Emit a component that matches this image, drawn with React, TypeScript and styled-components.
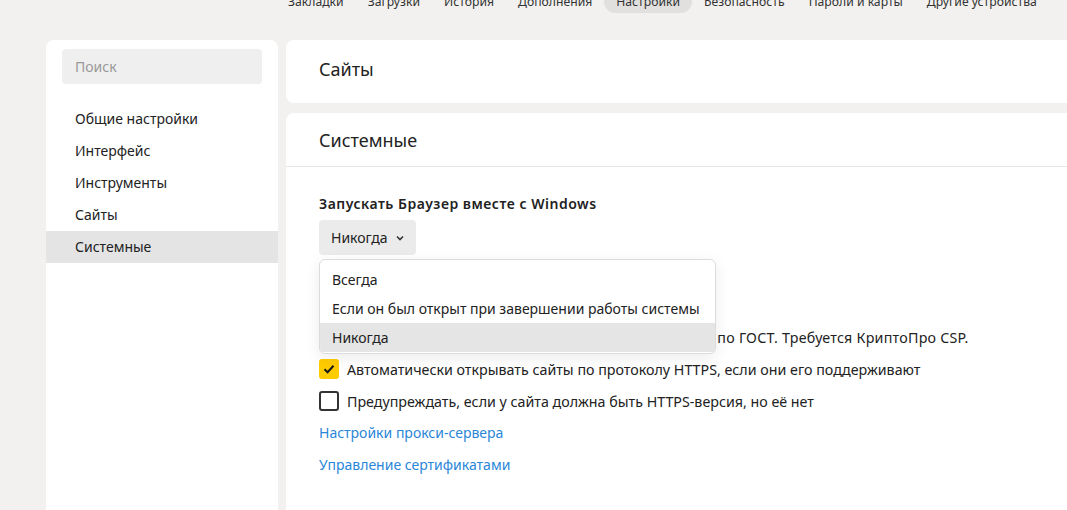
import React, { useState } from 'react';
import styled, { createGlobalStyle } from 'styled-components';

const GlobalStyle = createGlobalStyle`
    html, body {
        margin: 0;
        padding: 0;
        background: #f2f1ef;
        font-family: "Noto Sans", "Liberation Sans", sans-serif;
        color: #222;
        overflow: hidden;
    }
`;

const navItems = ['Закладки', 'Загрузки', 'История', 'Дополнения', 'Настройки', 'Безопасность', 'Пароли и карты', 'Другие устройства'];
const menuItems = ['Общие настройки', 'Интерфейс', 'Инструменты', 'Сайты', 'Системные'];
const startOptions = ['Всегда', 'Если он был открыт при завершении работы системы', 'Никогда'];

const App = () => {
    const [startMode, setStartMode] = useState('Никогда');
    const [httpsAuto, setHttpsAuto] = useState(true);
    const [httpsWarn, setHttpsWarn] = useState(false);
    const [gost, setGost] = useState(false);

    return (
        <React.Fragment>
            <GlobalStyle />
            <Page>
                <Nav>
                    {navItems.map(el => (
                        <NavTab key={el} $active={el === 'Настройки'}>{el}</NavTab>
                    ))}
                </Nav>
                <Body>
                    <Sidebar>
                        <Search placeholder="Поиск" />
                        <Menu>
                            {menuItems.map(el => (
                                <MenuItem key={el} $active={el === 'Системные'}>{el}</MenuItem>
                            ))}
                        </Menu>
                    </Sidebar>
                    <Main>
                        <Card>
                            <CardTitle>Сайты</CardTitle>
                        </Card>
                        <Card $grow>
                            <CardHeader>
                                <CardTitle>Системные</CardTitle>
                            </CardHeader>
                            <Content>
                                <Label>Запускать Браузер вместе с Windows</Label>
                                <SelectWrap>
                                    <SelectButton>
                                        {startMode}
                                        <svg width="8" height="6" viewBox="0 0 8 6">
                                            <path d="M1 1.5 L4 4.5 L7 1.5" stroke="#333" strokeWidth="1.6" fill="none" />
                                        </svg>
                                    </SelectButton>
                                    <Dropdown>
                                        {startOptions.map(el => (
                                            <Option key={el} $selected={el === startMode} onClick={() => setStartMode(el)}>{el}</Option>
                                        ))}
                                    </Dropdown>
                                </SelectWrap>
                                <SubHeading>Сеть</SubHeading>
                                <CheckRow onClick={() => setGost(!gost)}>
                                    <CheckBox $checked={gost}>{gost && <CheckMark />}</CheckBox>
                                    <span>
                                        <Spaced $amount={-0.15}>Подключаться к сайтам, использующим шифрование</Spaced>{' '}
                                        <Spaced $amount={0.25}>по ГОСТ. Требуется КриптоПро CSP.</Spaced>
                                    </span>
                                </CheckRow>
                                <CheckRow onClick={() => setHttpsAuto(!httpsAuto)}>
                                    <CheckBox $checked={httpsAuto}>{httpsAuto && <CheckMark />}</CheckBox>
                                    Автоматически открывать сайты по протоколу HTTPS, если они его поддерживают
                                </CheckRow>
                                <CheckRow onClick={() => setHttpsWarn(!httpsWarn)}>
                                    <CheckBox $checked={httpsWarn}>{httpsWarn && <CheckMark />}</CheckBox>
                                    Предупреждать, если у сайта должна быть HTTPS-версия, но её нет
                                </CheckRow>
                                <Link>Настройки прокси-сервера</Link>
                                <Link>Управление сертификатами</Link>
                            </Content>
                        </Card>
                    </Main>
                </Body>
            </Page>
        </React.Fragment>
    );
};

const CheckMark = () => (
    <svg width="14" height="14" viewBox="0 0 14 14">
        <path d="M2.5 7.2 L5.6 10.2 L11.5 3.8" stroke="#1a1a1a" strokeWidth="2" fill="none" />
    </svg>
);

const Page = styled.div`
    display: flex;
    flex-direction: column;
    height: 540px;
`;

const Nav = styled.div`
    display: flex;
    margin-top: -11px;
    padding-left: 276px;
    height: 24px;
    align-items: center;
`;

const NavTab = styled.div<{ $active?: boolean }>`
    font-size: 12.2px;
    color: #333;
    padding: 3px 12px;
    border-radius: 12px;
    white-space: nowrap;
    background: ${p => (p.$active ? '#e1e0de' : 'transparent')};
`;

const Body = styled.div`
    display: flex;
    gap: 8px;
    padding: 27px 0 0 46px;
    flex: 1;
    min-height: 0;
`;

const Sidebar = styled.div`
    width: 232px;
    flex-shrink: 0;
    background: #fff;
    border-radius: 8px 8px 0 0;
    padding-top: 9px;
`;

const Search = styled.input`
    display: block;
    box-sizing: border-box;
    width: 200px;
    height: 35px;
    margin: 0 16px;
    border: none;
    outline: none;
    border-radius: 4px;
    background: #efefef;
    padding: 0 13px;
    font-family: inherit;
    font-size: 14px;
    color: #222;
    &::placeholder {
        color: #999;
    }
`;

const Menu = styled.div`
    display: flex;
    flex-direction: column;
    margin-top: 19px;
`;

const MenuItem = styled.div<{ $active?: boolean }>`
    height: 32px;
    line-height: 32px;
    padding-left: 29px;
    font-size: 14px;
    color: #222;
    background: ${p => (p.$active ? '#e4e4e4' : 'transparent')};
`;

const Main = styled.div`
    flex: 1;
    display: flex;
    flex-direction: column;
    gap: 10px;
    margin-right: -20px;
`;

const Card = styled.div<{ $grow?: boolean }>`
    background: #fff;
    border-radius: 8px 0 0 8px;
    display: flex;
    flex-direction: column;
    ${p => (p.$grow ? 'flex: 1; border-bottom-left-radius: 0;' : 'height: 63px; justify-content: center; padding-bottom: 5px; box-sizing: border-box;')}
    padding-left: ${p => (p.$grow ? '0' : '33px')};
`;

const CardHeader = styled.div`
    height: 53px;
    display: flex;
    align-items: center;
    padding-left: 33px;
    border-bottom: 1px solid #e6e6e6;
`;

const CardTitle = styled.div`
    font-size: 18px;
    color: #222;
`;

const Content = styled.div`
    display: flex;
    flex-direction: column;
    align-items: flex-start;
    padding: 27px 0 0 33px;
`;

const Label = styled.div`
    font-size: 14px;
    font-weight: 600;
    letter-spacing: 0.5px;
    line-height: 20px;
    margin-bottom: 6px;
`;

const SelectWrap = styled.div`
    position: relative;
`;

const SelectButton = styled.div`
    display: flex;
    align-items: center;
    gap: 9px;
    height: 35px;
    padding: 0 12px;
    border-radius: 4px;
    background: #ebebeb;
    font-size: 14px;
    cursor: pointer;
`;

const Dropdown = styled.div`
    position: absolute;
    z-index: 10;
    top: 39px;
    left: 0;
    width: 397px;
    box-sizing: border-box;
    padding: 5px 0 1px;
    background: #fff;
    border: 1px solid #dcdcdc;
    border-radius: 6px;
    overflow: hidden;
    box-shadow: 0 4px 16px rgba(0, 0, 0, 0.08);
`;

const Option = styled.div<{ $selected?: boolean }>`
    height: 29px;
    line-height: 29px;
    padding-left: 12px;
    font-size: 14px;
    white-space: nowrap;
    background: ${p => (p.$selected ? '#e5e5e5' : 'transparent')};
    cursor: pointer;
`;

const SubHeading = styled.div`
    font-size: 14px;
    font-weight: 600;
    margin: 34px 0 10px;
    line-height: 22px;
`;

const CheckRow = styled.div`
    display: flex;
    align-items: center;
    gap: 8px;
    height: 32px;
    font-size: 14.25px;
    white-space: nowrap;
    cursor: pointer;
    &:last-of-type {
        margin-top: -1px;
    }
`;

const Spaced = styled.span<{ $amount: number }>`
    letter-spacing: ${p => p.$amount}px;
`;

const CheckBox = styled.div<{ $checked?: boolean }>`
    width: 20px;
    height: 20px;
    box-sizing: border-box;
    border-radius: 3px;
    display: flex;
    align-items: center;
    justify-content: center;
    flex-shrink: 0;
    background: ${p => (p.$checked ? '#ffcc00' : '#fff')};
    border: ${p => (p.$checked ? 'none' : '2px solid #333')};
`;

const Link = styled.div`
    height: 32px;
    line-height: 32px;
    font-size: 14px;
    color: #2a86d8;
    cursor: pointer;
`;

export default App;
